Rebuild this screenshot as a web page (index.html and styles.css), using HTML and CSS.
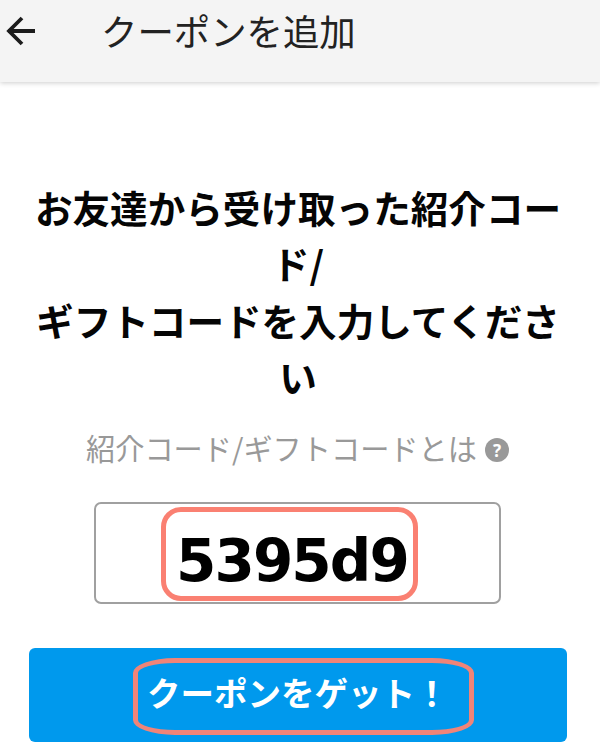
FILE: index.html
```
<!DOCTYPE html>
<html lang="ja">
<head>
<meta charset="utf-8">
<title>クーポンを追加</title>
<link rel="stylesheet" href="styles.css">
</head>
<body>
<header class="bar">
  <svg class="back" viewBox="0 0 32 32" width="32" height="32"><path d="M31 16H4M18 3L5 16L18 29" /></svg>
  <h1 class="title">クーポンを追加</h1>
</header>
<main class="content">
  <h2 class="lead">お友達から受け取った紹介コー<br>ド/<br>ギフトコードを入力してくださ<br>い</h2>
  <p class="help"><span>紹介コード/ギフトコードとは</span><span class="mark">?</span></p>
  <div class="field"><span class="code">5395d9</span></div>
  <button class="submit"><span class="label">クーポンをゲット！</span></button>
</main>
</body>
</html>
```

FILE: styles.css
```
* { box-sizing: border-box; }
body { margin: 0; height: 756px; overflow: hidden; background: #fff; color: #050505; font-family: "Noto Sans CJK JP", sans-serif; }
.bar { display: flex; align-items: center; height: 82px; padding: 0 0 20px 4px; background: #f4f4f4; box-shadow: 0 1px 5px rgba(0,0,0,.2); }
.back { fill: none; stroke: #1c1c1c; stroke-width: 3.8; }
.title { margin: -2px 0 0 65px; font-size: 36.4px; line-height: 56px; font-weight: 400; color: #222; white-space: nowrap; }
.content { display: flex; flex-direction: column; align-items: center; padding: 97px 5px 0 0; }
.lead { margin: 0 0 0 1px; font-size: 37.6px; line-height: 56.3px; font-weight: 700; text-align: center; white-space: nowrap; }
.help { display: flex; align-items: center; gap: 8px; margin: 20px 0 0; height: 50px; font-size: 29.2px; line-height: 46px; color: #999; white-space: nowrap; }
.help span:first-child { margin-top: -4px; }
.mark { display: flex; align-items: center; justify-content: center; width: 24px; height: 24px; margin-top: 2px; border-radius: 50%; background: #999; color: #fff; font: 700 17px "Noto Sans", sans-serif; }
.field { display: flex; align-items: flex-start; width: 407px; height: 102px; margin: 28px 0 0; padding: 3px 0 0 65px; border: 2px solid #a0a0a0; border-radius: 7px; }
.code { width: 257px; height: 94px; padding-left: 10px; border: 5px solid #fa8072; border-radius: 20px; font: 700 58px/98px "DejaVu Sans", sans-serif; letter-spacing: -1.9px; color: #000; }
.submit { display: flex; width: 538px; height: 94px; margin: 44px 0 0 1px; padding: 10px 0 0 104px; border: 0; border-radius: 6px; background: #0099ed; font-family: inherit; }
.label { width: 341px; height: 77px; padding-left: 9px; border: 5px solid #f08478; border-radius: 42px / 15px; font-size: 33.5px; line-height: 57px; font-weight: 700; text-align: left; color: #fff; white-space: nowrap; }
```
